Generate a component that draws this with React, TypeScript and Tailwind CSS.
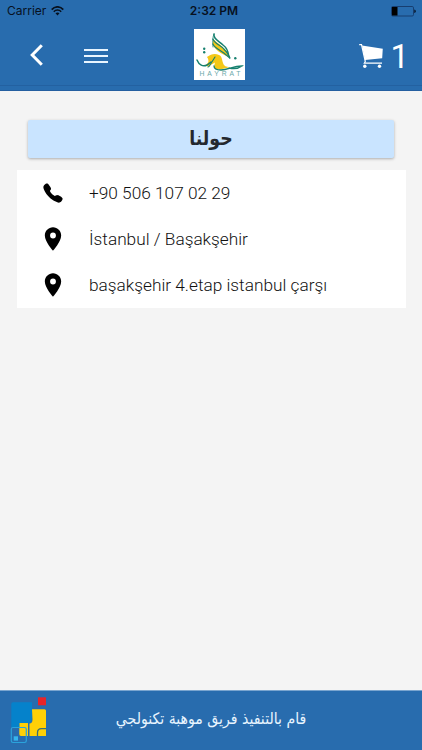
import { IoCall } from "react-icons/io5";
import { MdLocationOn } from "react-icons/md";
import type { ReactNode } from "react";

function StatusBar() {
  return (
    <div className="grid h-5 grid-cols-3 items-center pt-0.5 font-['Inter'] text-[12px] leading-none text-[#07111f]">
      <div className="flex items-center gap-[5px] pl-[7px]">
        <span>Carrier</span>
        <svg width="13" height="10" viewBox="0 0 13 10" fill="none" stroke="currentColor">
          <path d="M.7 3.6C4-.1 9-.1 12.3 3.6" strokeWidth="1.7" />
          <path d="M2.8 5.7c2-2.3 5.400-2.300 7.400 0" strokeWidth="1.5" />
          <path d="M6.500 9.500 4.500 7.300c1-1.100 3-1.100 4 0z" fill="currentColor" stroke="none" />
        </svg>
      </div>
      <span className="pl-1.5 text-center font-semibold">2:32 PM</span>
      <svg className="mr-1.5 justify-self-end" width="25" height="11" viewBox="0 0 25 11">
        <rect x=".5" y=".5" width="22" height="9.500" rx="1.300" fill="none" stroke="#173e70" />
        <rect x="1" y="1" width="5.500" height="8.500" fill="#000" />
        <path d="M23.300 3.500c2 .4 2 3.100 0 3.500z" fill="#07111f" />
      </svg>
    </div>
  );
}

function HayratLogo() {
  return (
    <svg width="51" height="51" viewBox="0 0 51 51">
      <rect width="51" height="51" fill="#fff" />
      <g fill="#f4c817">
        <path d="M19 10c5 5 14 9 17 19-6-4-13-5-17-13z" />
        <path d="M13 28c4-3 8-4 12-2 3 1 3 5 4 8 1 3 3 4 7 4l-10 2.500c-4 0-6-1-6-3l1-4-7 4-3-1c3-2 5-4 2-8.500z" />
      </g>
      <g fill="none" stroke="#16806f" strokeLinecap="round">
        <path d="M20 5c-1 5 5 7 9 11 4 3 5 6 5.500 10" strokeWidth="1.500" />
        <path d="M18.800 10c2 5 8 6 11 10 3 3 5 5 6 9" strokeWidth="1.200" />
        <path d="M18.800 15c2 4 7 6 11 9l6 5" strokeWidth="1.200" />
        <path d="M20 5c-1.500 3-1.500 9-1 13" strokeWidth=".8" />
        <path d="M3 31c2 5 6 7 10 5l4-3" strokeWidth="1.500" />
        <path d="m21 28-5 8q-1 2-2 2" strokeWidth="1.100" />
        <path d="M20 37c0 3 3 4 7 4 7 0 12-4 21-4-4 3-9 3-13 2" strokeWidth="1.300" />
      </g>
      <g fill="#16806f">
        <circle cx="10.200" cy="19.700" r="1.200" />
        <circle cx="10.200" cy="23.300" r="1.200" />
        <circle cx="41.300" cy="29.300" r="1.200" />
      </g>
      <text x="5.500" y="47" fontSize="6.800" textLength="41" fill="#6aa9aa" fontFamily="Liberation Sans">
        HAYRAT
      </text>
    </svg>
  );
}

function Header() {
  return (
    <header className="h-[91px] border-b border-[#245fa0] bg-[#286cae]">
      <StatusBar />
      <div className="flex h-[66px] border-b border-[#2361a1] text-white">
        <div className="w-[84px] pl-[30px] pt-6">
          <svg width="14" height="22" viewBox="0 0 14 22" fill="none">
            <path d="M11.800 1.200 2.200 11l9.600 9.800" stroke="currentColor" strokeWidth="3" />
          </svg>
        </div>
        <div className="flex w-6 flex-col gap-1 pt-[29px]">
          <span className="h-0.5 bg-[#e9f5ff]" />
          <span className="h-0.5 bg-[#e9f5ff]" />
          <span className="h-0.5 bg-[#e9f5ff]" />
        </div>
        <div className="ml-[86px] pt-[9px]">
          <HayratLogo />
        </div>
        <div className="ml-auto flex pr-[13px] pt-6">
          <svg width="24" height="25" viewBox="0 0 24 25">
            <path d="M.2.600h2.300L6.300 17.500l-1 1.700H23" fill="none" stroke="currentColor" strokeWidth="1.200" />
            <path d="m3 1.600 20.800 3.200-.6 9.500L6 16z" fill="currentColor" />
            <circle cx="5.800" cy="22.300" r="1.700" fill="currentColor" />
            <circle cx="20.500" cy="22.300" r="1.700" fill="currentColor" />
          </svg>
          <span className="ml-[7px] mt-[-5px] font-['Roboto'] text-[33px] leading-[36px] font-normal">1</span>
        </div>
      </div>
    </header>
  );
}

interface ContactRowProps {
  icon: ReactNode;
  children: ReactNode;
}

function ContactRow({ icon, children }: ContactRowProps) {
  return (
    <div className="flex h-[46px] items-center">
      <span className="flex w-[72px] justify-center">{icon}</span>
      <span className="pt-0.5 font-['Roboto'] text-[17.25px] font-light text-[#111]">{children}</span>
    </div>
  );
}

function TeamLogo() {
  return (
    <svg width="40" height="50" viewBox="0 0 40 50">
      <path d="M22 12.300h12.500q1.500 0 1.500 1.500V39H19.500V26.500q3 0 3-4z" fill="#ffd006" />
      <path d="M9.300 26H18v13h-7q-1.700 0-1.700-2z" fill="#ffd006" />
      <path d="M3 5.300h19V20q0 6-5 6H9.300v4H1.300V7q0-1.700 1.700-1.700z" fill="#0582cb" />
      <rect x="28" y=".3" width="8" height="8" fill="#e82429" />
      <path d="M36 31.700h-4.500q-4 0-4 4V39" fill="none" stroke="#396f73" strokeWidth="1.300" />
      <rect x="1.300" y="30.500" width="15" height="15" rx="1.700" fill="none" stroke="#2ba3dc" strokeWidth="1.200" />
      <rect x="3.700" y="39.300" width="4.300" height="4.300" fill="#35b6ee" />
    </svg>
  );
}

export default function App() {
  return (
    <div className="flex h-[750px] w-[422px] flex-col overflow-hidden bg-[#f4f4f4]">
      <Header />
      <main className="flex-1 pt-[29px]">
        <h1
          dir="rtl"
          className="ml-[28px] flex h-[38px] w-[366px] items-center justify-center rounded-[2px] bg-[#c9e4ff] font-['DejaVu_Sans_Condensed','DejaVu_Sans',sans-serif] text-[19.3px] font-bold text-[#24282e] shadow-[0_1px_3px_rgba(0,0,0,0.3)]"
        >
          حولنا
        </h1>
        <section className="ml-[17px] mt-3 w-[389px] bg-white">
          <ContactRow icon={<IoCall size={22} />}>+90 506 107 02 29</ContactRow>
          <ContactRow icon={<MdLocationOn size={28} />}>İstanbul / Başakşehir</ContactRow>
          <ContactRow icon={<MdLocationOn size={28} />}>başakşehir 4.etap istanbul çarşı</ContactRow>
        </section>
      </main>
      <footer className="flex h-[60px] border-t border-[#7aa5cf] bg-[#286cae]">
        <div className="w-[82px] pl-2.5 pt-1.5">
          <TeamLogo />
        </div>
        <p
          dir="rtl"
          className="w-[258px] pt-4 text-center font-['DejaVu_Sans_Condensed','DejaVu_Sans',sans-serif] text-[15.7px] leading-6 whitespace-nowrap text-[#e8f5ff]"
        >
          قام بالتنفيذ فريق موهبة تكنولجي
        </p>
      </footer>
    </div>
  );
}
